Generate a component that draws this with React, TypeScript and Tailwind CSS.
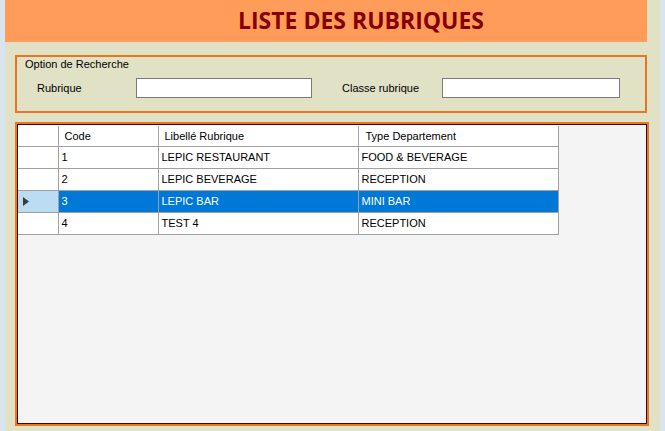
const rows = [
  { code: "1", libelle: "LEPIC RESTAURANT", type: "FOOD & BEVERAGE" },
  { code: "2", libelle: "LEPIC BEVERAGE", type: "RECEPTION" },
  { code: "3", libelle: "LEPIC BAR", type: "MINI BAR", selected: true },
  { code: "4", libelle: "TEST 4", type: "RECEPTION" },
];

export default function App() {
  return (
    <div className="w-[665px] h-[431px] bg-[#D8E4F0] px-[5px] flex font-['Liberation_Sans',Arial,sans-serif] text-[11px] text-black">
      <div className="flex-1 bg-[#E1E1C6] flex flex-col">
        {/* Titre */}
        <div className="h-[42px] w-[642px] bg-[#FF9C5A] flex items-center justify-center pl-[70px] pb-[2px]">
          <h1 className="font-['Open_Sans',sans-serif] font-bold text-[23px] text-[#850000]">
            LISTE DES RUBRIQUES
          </h1>
        </div>

        {/* Option de recherche */}
        <div className="mt-[13px] ml-[10px] w-[632px] h-[58px] border-2 border-[#E8751F] px-[8px] pt-[1px]">
          <div className="leading-[13px]">Option de Recherche</div>
          <div className="flex items-center mt-[7px] pl-[12px]">
            <span className="w-[99px]">Rubrique</span>
            <input className="w-[176px] h-[20px] bg-white border border-[#7A7A7A] outline-none" />
            <span className="ml-[30px] w-[100px]">Classe rubrique</span>
            <input className="w-[178px] h-[20px] bg-white border border-[#7A7A7A] outline-none" />
          </div>
        </div>

        {/* Grille */}
        <div className="mt-[9px] ml-[10px] w-[634px] h-[304px] border-2 border-[#E8751F]">
          <div className="w-full h-full border border-[#3A0A00] bg-[#F4F4F4] pt-[1px]">
            <table className="border-collapse table-fixed w-[540px] bg-white">
              <colgroup>
                <col className="w-[40px]" />
                <col className="w-[100px]" />
                <col className="w-[200px]" />
                <col className="w-[200px]" />
              </colgroup>
              <thead>
                <tr className="h-[20px]">
                  <th className="border-r border-b border-[#A0A0A0]" />
                  <th className="border-r border-b border-[#A0A0A0] font-normal text-left pl-[6px]">Code</th>
                  <th className="border-r border-b border-[#A0A0A0] font-normal text-left pl-[6px]">Libellé Rubrique</th>
                  <th className="border-r border-b border-[#A0A0A0] font-normal text-left pl-[7px]">Type Departement</th>
                </tr>
              </thead>
              <tbody>
                {rows.map((r) => (
                  <tr key={r.code} className="h-[22px]">
                    <td className={`border-r border-b border-[#A0A0A0] ${r.selected ? "bg-[#BCDCF4]" : ""}`}>
                      {r.selected && (
                        <svg width="6" height="9" viewBox="0 0 6 9" className="ml-[5px]">
                          <path d="M0 0 L6 4.5 L0 9 Z" fill="#3C3C3C" />
                        </svg>
                      )}
                    </td>
                    <td className={`border-r border-b border-[#A0A0A0] pl-[3px] ${r.selected ? "bg-[#0078D7] text-white" : ""}`}>{r.code}</td>
                    <td className={`border-r border-b border-[#A0A0A0] pl-[3px] ${r.selected ? "bg-[#0078D7] text-white" : ""}`}>{r.libelle}</td>
                    <td className={`border-r border-b border-[#A0A0A0] pl-[3px] ${r.selected ? "bg-[#0078D7] text-white" : ""}`}>{r.type}</td>
                  </tr>
                ))}
              </tbody>
            </table>
          </div>
        </div>
      </div>
    </div>
  );
}
